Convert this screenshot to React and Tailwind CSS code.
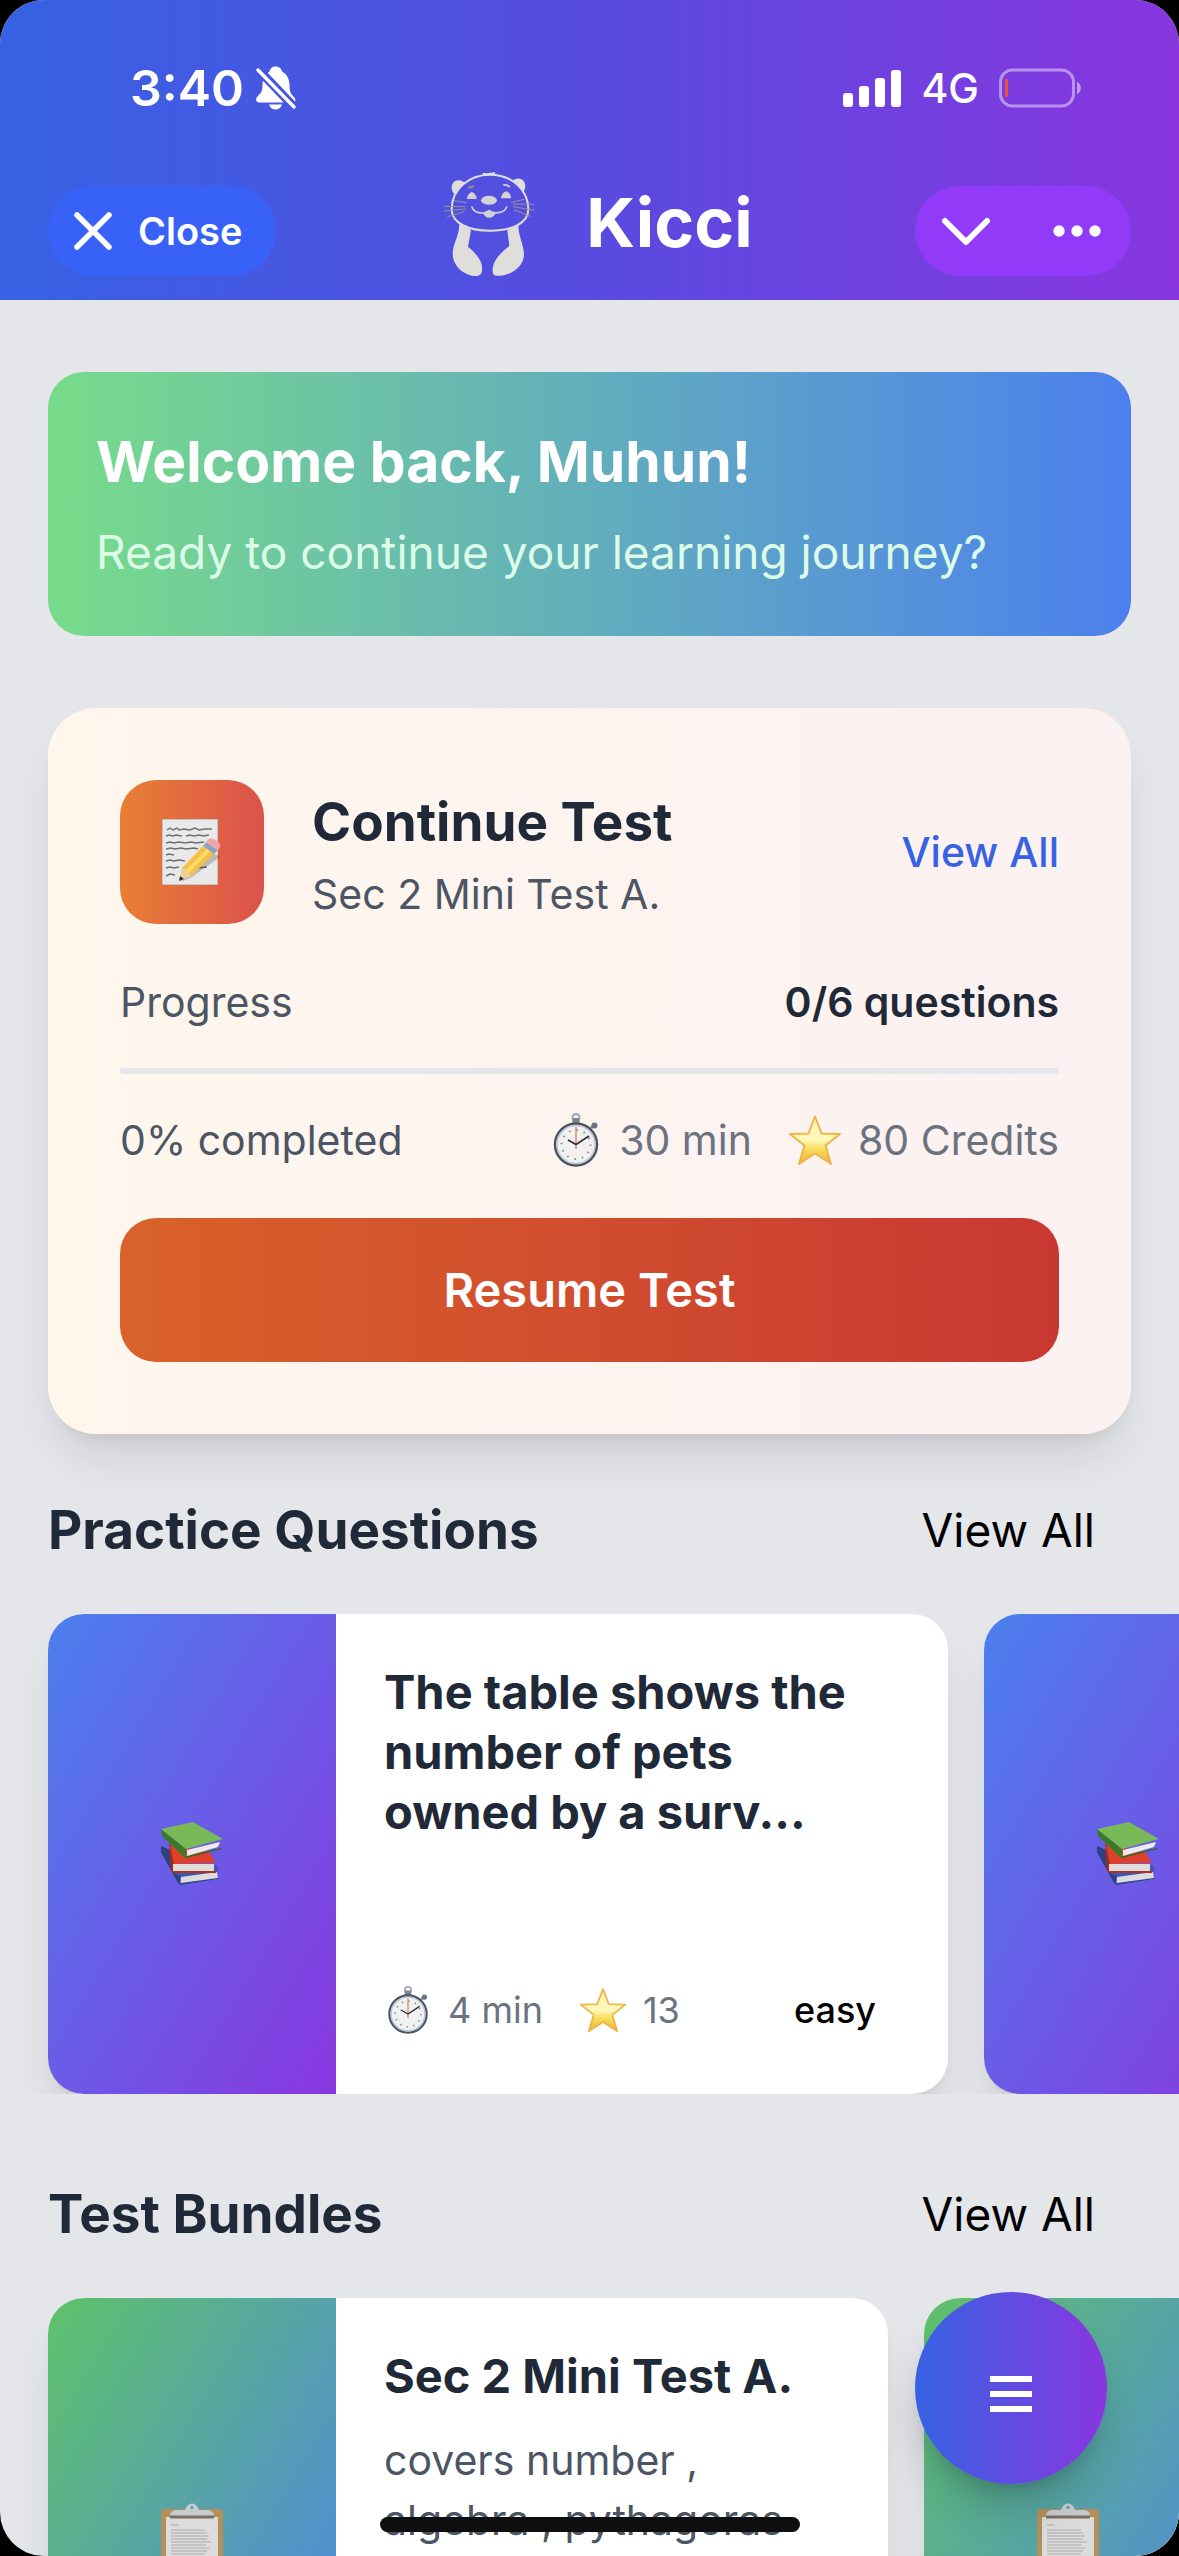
// src/App.jsx
import React from 'react';

const practiceQuestions = [
    { id: 1, title: 'The table shows the number of pets owned by a surv...', minutes: 4, credits: 13, level: 'easy' },
    { id: 2 },
];

const testBundles = [
    { id: 1, title: 'Sec 2 Mini Test A.', description: 'covers number , algebra , pythagoras' },
    { id: 2 },
];

const BellOffIcon = () => (
    <svg viewBox="0 0 40 44" className="w-10 h-11" aria-hidden="true">
        <mask id="bell-cut">
            <rect width="40" height="44" fill="white" />
            <path d="M-1 0 L41 44" stroke="black" strokeWidth="9" />
        </mask>
        <g fill="white" mask="url(#bell-cut)">
            <path d="M19.500 0.500c3.500 0 6 2 6.500 5c5.500 3 7.500 8 7.500 14c0 6 1.500 8.500 4.500 11.500c2.500 3 1.500 5.500-1.500 5.500H3.500c-3.500 0-4.500-3-2-6C5 27 6.500 25 6.500 19.500c0-6 2-11 7-14c.5-3 2.500-5 6-5z" />
        </g>
        <path d="M13 38.500h13c-1 3.500-3.500 5-6.500 5s-5.500-1.500-6.500-5z" fill="white" />
        <path d="M2 4 L38 41" stroke="white" strokeWidth="3.400" strokeLinecap="round" />
    </svg>
);

const SignalIcon = () => (
    <svg viewBox="0 0 58 38" className="w-[58px] h-[38px]" fill="white" aria-hidden="true">
        <rect x="0" y="24" width="10" height="14" rx="3" />
        <rect x="16" y="17" width="10" height="21" rx="3" />
        <rect x="32" y="9" width="10" height="29" rx="3" />
        <rect x="48" y="1" width="10" height="37" rx="3" />
    </svg>
);

const BatteryIcon = () => (
    <svg viewBox="0 0 84 40" className="w-[84px] h-10" aria-hidden="true">
        <rect x="1.500" y="2" width="73" height="36" rx="12" fill="none" stroke="white" strokeOpacity="0.45" strokeWidth="3" />
        <rect x="6" y="11" width="3" height="18" fill="#eb4e3d" />
        <path d="M78 14c5 1 5 11 0 12z" fill="white" fillOpacity="0.5" />
    </svg>
);

const OtterLogo = () => (
    <svg viewBox="60 66 288 312" className="w-24 h-26" role="img" aria-label="Kicci otter">
        <g fill="#dfdedb">
            <path d="M98 133C84 120 86 92 108 91C118 91 124 95 128 99C114 108 104 120 98 133Z" />
            <path d="M271 94C280 83 300 82 308 98C312 108 310 118 303 126C296 113 284 102 271 94Z" />
            <path d="M180 76L184 68L194 70L220 67L218 76Z" />
            <path d="M112 222L147 240L138 290C160 308 184 335 180 358C182 372 170 380 158 378C120 374 92 345 92 310C94 275 111 262 112 222Z" />
            <path d="M256 240L289 226C290 262 304 280 306 312C306 350 268 378 224 377C212 378 210 366 213 350C218 325 240 305 262 288Z" />
        </g>
        <path d="M204 74C140 74 89 118 89 178C89 220 140 242 205 242C270 242 319 220 319 178C319 118 268 74 204 74Z" fill="none" stroke="#dfdedb" strokeWidth="6" />
        <g fill="#d3d2d3">
            <path d="M135 147C135 136 144 128 150 126C157 129 165 138 164 147Z" />
            <path d="M237 145C238 133 247 125 253 124C261 127 268 136 267 145Z" />
            <ellipse cx="201" cy="151" rx="24" ry="13.500" />
            <path d="M183 188C192 184 197 180 201 179C206 180 213 186 221 189C216 201 208 203 202 203C194 203 187 199 183 188Z" />
        </g>
        <g fill="none" stroke="#d3d2d3" strokeWidth="5" strokeLinecap="round">
            <path d="M150 171C157 192 184 190 192 187" />
            <path d="M212 187C222 190 247 190 254 171" />
            <path d="M245 105C252 104 258 106 262 110" />
        </g>
        <path d="M140 113L154 109" stroke="#a08f76" strokeWidth="6" strokeLinecap="round" />
        <g stroke="#9a948f" strokeWidth="3" strokeLinecap="round">
            <path d="M97 152L133 158M69 169L130 170M67 183L130 177M77 200L126 185" />
            <path d="M306 148L268 157M336 163L274 162M336 181L274 170M325 199L277 180" />
        </g>
    </svg>
);

const StopwatchIcon = ({ className }) => (
    <svg viewBox="0 0 54 54" className={className} aria-hidden="true">
        <circle cx="27" cy="4.500" r="3.500" fill="none" stroke="#a3a7ad" strokeWidth="2" />
        <rect x="23.500" y="5" width="7" height="6" rx="1" fill="#7d838c" />
        <path d="M42 15l4-4" stroke="#7d838c" strokeWidth="3" />
        <circle cx="45.500" cy="12.500" r="3" fill="#6b7280" />
        <circle cx="27" cy="31.500" r="21" fill="#f1f1f1" stroke="#4c525d" strokeWidth="2.400" />
        <circle cx="27" cy="31.500" r="19" fill="none" stroke="#b9c6da" strokeWidth="1.500" />
        <circle cx="27" cy="31.500" r="14.500" fill="none" stroke="#8b8b8b" strokeWidth="2" strokeDasharray="1.500 6.090" />
        <path d="M27 36V14" stroke="#e0704f" strokeWidth="1.200" />
        <path d="M19 27l8 4.500L40 23" fill="none" stroke="#2b2f36" strokeWidth="1.600" />
    </svg>
);

const StarIcon = ({ className }) => (
    <svg viewBox="0 0 54 54" className={className} aria-hidden="true">
        <defs>
            <linearGradient id="star-fill" x1="0" y1="0" x2="0" y2="1">
                <stop offset="0" stopColor="#fdf3b4" />
                <stop offset="0.5" stopColor="#fdf8b8" />
                <stop offset="0.7" stopColor="#f8dc57" />
                <stop offset="1" stopColor="#eeb040" />
            </linearGradient>
        </defs>
        <path
            d="M27 3.500L33.500 20.500L52 21L37.500 32.500L43 51L27 40.500L11 51L16.500 32.500L2 21L20.500 20.500Z"
            fill="url(#star-fill)"
            stroke="#edb54a"
            strokeWidth="2"
            strokeLinejoin="round"
        />
    </svg>
);

const MemoIcon = () => (
    <svg viewBox="0 0 60 66" className="w-[60px] h-[66px]" aria-hidden="true">
        <rect x="0.500" y="0.500" width="55" height="65" fill="#e9e9e9" stroke="#c4c4c4" />
        <g fill="none" stroke="#6f6f6f" strokeWidth="1.400">
            <path d="M5 11l3-2 3 2 4-2 2 2 5-1 6 1 5-2 4 2 6-1 7 0" />
            <path d="M4 17l3-1 4 1 3-1 6 1M24 17l4-1 4 1 5-1 4 1 6-1" />
            <path d="M4 24l4-1 4 1 5-1 6 1 6-1 5 1 8-1" />
            <path d="M4 30l5-1 4 1 6-1 5 1 8-1 4 1" />
            <path d="M4 36l3-1 5 1" />
            <path d="M4 42l4-1 4 1 5-1 6 1" />
            <path d="M4 49l4-1 4 1 5-1M4 57l4-2 5 1M36 49l9-1" />
        </g>
        <path d="M19 63L44 30L58 38L30 58Z" fill="#000000" fillOpacity="0.2" />
        <path d="M17 62L20 49L26 50L29 57Z" fill="#efd09b" />
        <path d="M17 62L18 57L22 60Z" fill="#2f2f2f" />
        <path d="M20 49L41 27L52 35L29 57L26 51Z" fill="#f5c142" />
        <path d="M24 51L45 30L48 32L27 54Z" fill="#fadb6c" />
        <path d="M41 27L44 23L56 31L52 35Z" fill="#8fa3c0" />
        <path d="M44 23C47 18 51 19 55 22C60 25 58 29 56 31Z" fill="#f2a3a6" />
    </svg>
);

// stack of three: blue at the bottom, red, green on top
const BooksIcon = () => (
    <svg viewBox="0 0 62 64" className="w-[62px] h-16 shrink-0" aria-hidden="true">
        <path d="M0 24L9 28L20 54L18 63L0 30Z" fill="#2b4381" />
        <path d="M12 50L56 43L58 48L54 51L20 55Z" fill="#3a59b5" />
        <path d="M20 55L56 50L57 57L20 62Z" fill="#dcdcde" />
        <path d="M18 63L58 57L57 56L20 61Z" fill="#2b4381" />
        <path d="M8 22L12 24L14 49L10 49Z" fill="#a82a1d" />
        <path d="M9 23L48 30L55 41L13 42Z" fill="#dd412e" />
        <path d="M12 42L53 42L53 49L12 49Z" fill="#dfdddb" />
        <path d="M10 49L55 49L55 51L12 51Z" fill="#b3301f" />
        <path d="M0 7L25 27L25 37L1 14Z" fill="#3c7a27" />
        <path d="M25 36L61 27L60 26L26 34Z" fill="#2f6b1e" />
        <path d="M0 7L32 0L62 17L25 27Z" fill="#79b957" />
        <path d="M26 28L59 20L57 25L26 34Z" fill="#ececec" />
    </svg>
);

const ClipboardIcon = () => (
    <svg viewBox="0 0 62 70" className="w-[62px] h-[70px] shrink-0" aria-hidden="true">
        <rect x="0" y="6" width="62" height="64" rx="4" fill="#b3905a" />
        <rect x="5" y="14" width="52" height="52" fill="#dcdcdc" />
        <path d="M9 15V12Q10 7 16 7H24Q26 0.500 31 0.500T38 7H46Q52 7 53 12V15Z" fill="#c9cccf" />
        <rect x="9" y="12.500" width="44" height="3" fill="#7b6f68" />
        <circle cx="31" cy="4.500" r="1.600" fill="#54a0a5" />
        <path
            d="M10 22H18M10 27H44M10 30H46M10 33H48M10 36H46M10 39H50M10 42H45M10 45H48M10 48H46M10 51H44M10 54H48"
            stroke="#a9a9a9"
            strokeWidth="1.200"
        />
    </svg>
);

const Header = () => (
    <header className="shrink-0 bg-linear-to-r/srgb from-[#3662e3] via-[#584be0] to-[#8936df] text-white">
        <div className="flex h-[172px] items-center justify-between pt-1 pl-[130px] pr-24">
            <div className="flex items-center gap-3">
                <span className="text-[50px] leading-[60px] font-semibold">3:40</span>
                <BellOffIcon />
            </div>
            <div className="flex items-center gap-5">
                <SignalIcon />
                <span className="text-[41px] leading-[48px] font-medium">4G</span>
                <BatteryIcon />
            </div>
        </div>
        <div className="grid grid-cols-[1fr_auto_1fr] items-end px-12 pb-6">
            <button className="flex h-[90px] w-[228px] items-center gap-6 rounded-full bg-[#3861f8] pl-6">
                <svg viewBox="0 0 42 42" className="w-[42px] h-[42px]" aria-hidden="true">
                    <path d="M5 5L37 37M37 5L5 37" stroke="white" strokeWidth="5.500" strokeLinecap="round" />
                </svg>
                <span className="text-[38px] leading-[48px] font-semibold">Close</span>
            </button>
            <div className="flex items-center gap-12 pl-4">
                <OtterLogo />
                <h1 className="pb-1 text-[68px] leading-[84px] font-bold">Kicci</h1>
            </div>
            <div className="flex h-[90px] w-[216px] items-center justify-between justify-self-end rounded-full bg-[#913bf8] px-6">
                <button aria-label="Minimise">
                    <svg viewBox="0 0 54 36" className="w-[54px] h-9" aria-hidden="true">
                        <path d="M6 8L27 29L48 8" fill="none" stroke="white" strokeWidth="6" strokeLinecap="round" strokeLinejoin="round" />
                    </svg>
                </button>
                <button aria-label="More options">
                    <svg viewBox="0 0 60 24" className="w-[60px] h-6" fill="white" aria-hidden="true">
                        <circle cx="12" cy="12" r="5.700" />
                        <circle cx="30" cy="12" r="5.700" />
                        <circle cx="48" cy="12" r="5.700" />
                    </svg>
                </button>
            </div>
        </div>
    </header>
);

const WelcomeBanner = ({ name }) => (
    <section className="mx-12 flex flex-col gap-3 rounded-[36px] bg-linear-to-r/srgb from-[#78dc8a] to-[#4c80ee] p-12">
        <h2 className="text-[57px] leading-[84px] font-bold text-white">Welcome back, {name}!</h2>
        <p className="text-[46px] leading-[72px] text-[#dcfce7]">Ready to continue your learning journey?</p>
    </section>
);

const ContinueTestCard = ({ title, answered, total, minutes, credits }) => {
    const percent = Math.round((answered / total) * 100);

    return (
        <section className="mx-12 mt-[72px] rounded-[48px] bg-linear-to-r/srgb from-[#fff7ec] via-[#fdf4f0] to-[#fbf1f1] p-[72px] shadow-[0_30px_45px_-9px_rgba(0,0,0,0.1),0_12px_18px_-12px_rgba(0,0,0,0.1)]">
            <div className="flex items-center">
                <div className="flex size-36 items-center justify-center rounded-[36px] bg-linear-to-r/srgb from-[#e87f35] to-[#dc524c]">
                    <MemoIcon />
                </div>
                <div className="ml-12 flex-1">
                    <h3 className="text-[53px] leading-[84px] font-bold text-[#1f2937]">Continue Test</h3>
                    <p className="text-[41px] leading-[60px] text-[#4b5563]">{title}</p>
                </div>
                <a href="#tests" className="text-[41px] leading-[60px] font-medium text-[#3662e3]">View All</a>
            </div>
            <div className="mt-12 flex justify-between text-[41px] leading-[60px]">
                <span className="text-[#4b5563]">Progress</span>
                <span className="font-semibold text-[#1f2937]">{answered}/{total} questions</span>
            </div>
            <div className="my-9 h-1.5 overflow-hidden rounded-full bg-[#e4e6ea]">
                <div className="h-full rounded-full bg-[#e87f35]" style={{ width: `${percent}%` }} />
            </div>
            <div className="flex items-center justify-between text-[41px] leading-[60px]">
                <span className="text-[#4b5563]">{percent}% completed</span>
                <div className="flex gap-9 text-[#6b7280]">
                    <span className="flex items-center gap-4"><StopwatchIcon className="size-[54px]" />{minutes} min</span>
                    <span className="flex items-center gap-4"><StarIcon className="size-[54px]" />{credits} Credits</span>
                </div>
            </div>
            <button className="mt-12 h-36 w-full rounded-[36px] bg-linear-to-r/srgb from-[#d9622a] to-[#c83832] text-[47px] leading-[72px] font-semibold text-white">
                Resume Test
            </button>
        </section>
    );
};

const SectionHeader = ({ title, href }) => (
    <div className="mx-12 mb-9 flex h-24 items-center justify-between">
        <h2 className="text-[53px] leading-[84px] font-bold text-[#1f2937]">{title}</h2>
        <a href={href} className="px-9 text-[46px] leading-[72px] text-black">View All</a>
    </div>
);

const PracticeCard = ({ question }) => (
    <article className="flex h-[480px] w-[900px] shrink-0 overflow-hidden rounded-[36px] bg-white shadow-[0_30px_45px_-9px_rgba(0,0,0,0.1),0_12px_18px_-12px_rgba(0,0,0,0.1)]">
        <div className="flex w-72 shrink-0 items-center justify-center bg-linear-to-br/srgb from-[#4c80ee] to-[#8936df]">
            <BooksIcon />
        </div>
        {question.title && (
            <div className="flex flex-1 flex-col justify-between p-12">
                <h3 className="pr-6 text-[47px] leading-[60px] font-bold text-[#1f2937]">{question.title}</h3>
                <div className="flex items-center justify-between text-[36px] leading-[48px]">
                    <div className="flex gap-9 text-[#6b7280]">
                        <span className="flex items-center gap-4"><StopwatchIcon className="size-12" />{question.minutes} min</span>
                        <span className="flex items-center gap-4"><StarIcon className="size-12" />{question.credits}</span>
                    </div>
                    <span className="px-6 py-3 font-medium text-black">{question.level}</span>
                </div>
            </div>
        )}
    </article>
);

const BundleCard = ({ bundle }) => (
    <article className="flex h-[480px] w-[840px] shrink-0 overflow-hidden rounded-[36px] bg-white shadow-[0_30px_45px_-9px_rgba(0,0,0,0.1),0_12px_18px_-12px_rgba(0,0,0,0.1)]">
        <div className="flex w-72 shrink-0 items-center justify-center bg-linear-to-br/srgb from-[#5fc26a] to-[#4c80ee]">
            <ClipboardIcon />
        </div>
        {bundle.title && (
            <div className="flex flex-1 flex-col gap-6 p-12">
                <h3 className="text-[47px] leading-[60px] font-bold text-[#1f2937]">{bundle.title}</h3>
                <p className="text-[41px] leading-[60px] text-[#4b5563]">{bundle.description}</p>
            </div>
        )}
    </article>
);

const App = () => {
    return (
        <div className="bg-black">
            <div className="relative flex h-screen flex-col overflow-hidden rounded-[44px] bg-[#e4e6ea] font-['Inter','Liberation_Sans',sans-serif]">
                <Header />
                <main className="min-h-0 flex-1 overflow-hidden pt-[72px]">
                    <WelcomeBanner name="Muhun" />
                    <ContinueTestCard title="Sec 2 Mini Test A." answered={0} total={6} minutes={30} credits={80} />
                    <section className="mt-12">
                        <SectionHeader title="Practice Questions" href="#practice" />
                        <div className="flex gap-9 overflow-hidden px-12">
                            {practiceQuestions.map((question) => (
                                <PracticeCard key={question.id} question={question} />
                            ))}
                        </div>
                    </section>
                    <section className="mt-[72px]">
                        <SectionHeader title="Test Bundles" href="#bundles" />
                        <div className="flex gap-9 overflow-hidden px-12">
                            {testBundles.map((bundle) => (
                                <BundleCard key={bundle.id} bundle={bundle} />
                            ))}
                        </div>
                    </section>
                </main>
                {/* floating menu */}
                <button
                    aria-label="Menu"
                    className="absolute right-[72px] bottom-[72px] flex size-48 items-center justify-center rounded-full bg-linear-to-r/srgb from-[#3662e3] to-[#8936df] pt-3 shadow-[0_30px_45px_-9px_rgba(0,0,0,0.2),0_12px_18px_-12px_rgba(0,0,0,0.2)]"
                >
                    <svg viewBox="0 0 42 36" className="w-[42px] h-9" fill="white" aria-hidden="true">
                        <rect y="0" width="42" height="6" />
                        <rect y="15" width="42" height="6" />
                        <rect y="30" width="42" height="6" />
                    </svg>
                </button>
                <div className="absolute bottom-6 left-1/2 h-[15px] w-[420px] -translate-x-1/2 rounded-full bg-[#0f0f0f]" />
            </div>
        </div>
    );
};

export default App;
